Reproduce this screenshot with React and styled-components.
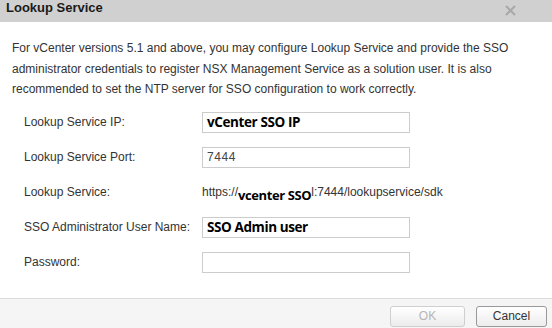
import React from "react"
import styled, { createGlobalStyle } from "styled-components"

const GlobalStyle = createGlobalStyle`
  html, body {
    margin: 0;
    padding: 0;
    background: #ffffff;
  }
  body {
    font-family: "Liberation Sans", Arial, sans-serif;
    font-size: 12px;
    color: #333333;
  }
`

const Dialog = styled.div`
  width: 552px;
  height: 328px;
  display: flex;
  flex-direction: column;
  background: #ffffff;
  overflow: hidden;
`

const TitleBar = styled.div`
  height: 22px;
  flex: none;
  background: #d0d0d0;
  display: flex;
  align-items: flex-start;
  justify-content: space-between;
  padding: 0 6px;
  box-sizing: border-box;
`

const Title = styled.div`
  font-weight: bold;
  font-size: 13px;
  line-height: 15px;
  color: #1a1a1a;
`

const Close = styled.button`
  border: 0;
  background: none;
  padding: 0;
  margin: 4px 30px 0 0;
  width: 12px;
  height: 12px;
  display: flex;
  align-items: center;
  justify-content: center;
  cursor: pointer;
`

const Body = styled.div`
  flex: 1;
  padding: 16px 12px 0 12px;
`

const Intro = styled.p`
  margin: 0 0 12px 0;
  line-height: 20.5px;
  color: #333333;
`

const Form = styled.div`
  display: flex;
  flex-direction: column;
  padding-left: 12px;
`

const Row = styled.div`
  display: grid;
  grid-template-columns: 178px 208px;
  height: 35px;
  align-items: start;
`

const Label = styled.div`
  padding-top: 3px;
  line-height: 14px;
  color: #333333;
`

const Field = styled.div`
  height: 21px;
  box-sizing: border-box;
  border: 1px solid #cccccc;
  background: #ffffff;
  display: flex;
  align-items: center;
  padding: 0 4px;
  font-size: ${(p) => (p.$bold ? "13.5px" : "12px")};
  font-weight: ${(p) => (p.$bold ? "bold" : "normal")};
  font-family: ${(p) =>
    p.$bold ? `"Open Sans", Lato, sans-serif` : `"Liberation Sans", Arial, sans-serif`};
  color: ${(p) => (p.$bold ? "#000000" : "#444444")};
  letter-spacing: ${(p) => (p.$bold ? "-0.4px" : "0.6px")};
`

const Url = styled.div`
  padding-top: 2px;
  line-height: 14px;
  color: #333333;
  white-space: nowrap;
`

const Host = styled.span`
  font-family: "Open Sans", Lato, sans-serif;
  font-weight: bold;
  font-size: 13px;
  color: #000000;
  letter-spacing: -0.4px;
  position: relative;
  top: 4px;
`

const Footer = styled.div`
  height: 30px;
  flex: none;
  background: #f5f5f5;
  border-top: 1px solid #dddddd;
  box-sizing: border-box;
  display: flex;
  align-items: center;
  justify-content: flex-end;
  gap: 11px;
  padding: 0 5px 0 0;
`

const Button = styled.button`
  width: ${(p) => p.$width}px;
  height: 21px;
  border-radius: 3px;
  border: 1px solid ${(p) => (p.disabled ? "#cfcfcf" : "#999999")};
  background: linear-gradient(#ffffff, #ececec);
  font-family: "Liberation Sans", Arial, sans-serif;
  font-size: 12px;
  color: ${(p) => (p.disabled ? "#b5b5b5" : "#333333")};
  margin-top: 5px;
  padding: 0;
`

const rows = [
  { label: "Lookup Service IP:", value: "vCenter SSO IP", bold: true },
  { label: "Lookup Service Port:", value: "7444" },
  { label: "Lookup Service:", url: true },
  { label: "SSO Administrator User Name:", value: "SSO Admin user", bold: true },
  { label: "Password:", value: "" },
]

export default function App() {
  return (
    <>
      <GlobalStyle />
      <Dialog>
        <TitleBar>
          <Title>Lookup Service</Title>
          <Close aria-label="Close">
            <svg width="11" height="11" viewBox="0 0 11 11">
              <path d="M1 1 L10 10 M10 1 L1 10" stroke="#a8a8a8" strokeWidth="2" />
            </svg>
          </Close>
        </TitleBar>
        <Body>
          <Intro>
            For vCenter versions 5.1 and above, you may configure Lookup Service and provide the SSO
            administrator credentials to register NSX Management Service as a solution user. It is also
            recommended to set the NTP server for SSO configuration to work correctly.
          </Intro>
          <Form>
            {rows.map((r) => (
              <Row key={r.label}>
                <Label>{r.label}</Label>
                {r.url ? (
                  <Url>
                    https://<Host>vcenter SSO</Host>l:7444/lookupservice/sdk
                  </Url>
                ) : (
                  <Field $bold={r.bold}>{r.value}</Field>
                )}
              </Row>
            ))}
          </Form>
        </Body>
        <Footer>
          <Button $width={75} disabled>
            OK
          </Button>
          <Button $width={71}>Cancel</Button>
        </Footer>
      </Dialog>
    </>
  )
}
